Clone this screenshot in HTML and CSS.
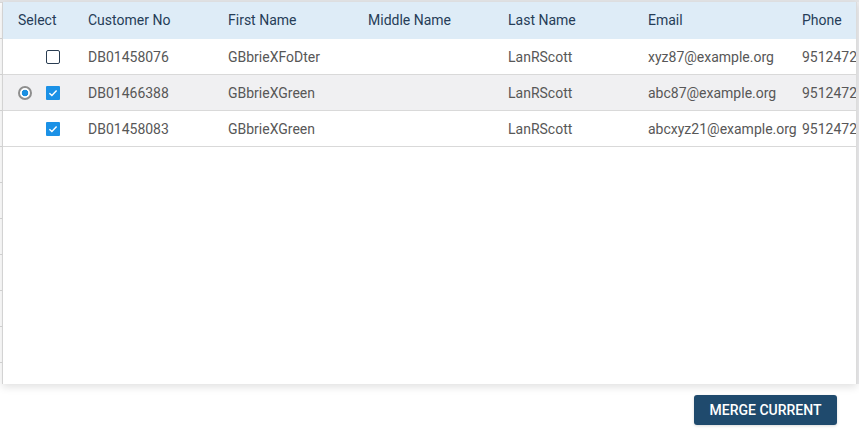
FILE: index.html
```html
<!DOCTYPE html>
<html>
<head>
<meta charset="utf-8">
<link rel="stylesheet" href="styles.css">
</head>
<body>
<div class="page">
  <div class="top-strip"></div>
  <div class="stage">
    <div class="left-edge"></div>
    <div class="panel">
      <div class="row head">
        <div class="cell sel">Select</div>
        <div class="cell">Customer No</div>
        <div class="cell">First Name</div>
        <div class="cell">Middle Name</div>
        <div class="cell">Last Name</div>
        <div class="cell">Email</div>
        <div class="cell">Phone</div>
      </div>
      <div class="row">
        <div class="cell sel"><span class="radio-space"></span><span class="cb"></span></div>
        <div class="cell">DB01458076</div>
        <div class="cell">GBbrieXFoDter</div>
        <div class="cell"></div>
        <div class="cell">LanRScott</div>
        <div class="cell">xyz87@example.org</div>
        <div class="cell">9512472</div>
      </div>
      <div class="row current">
        <div class="cell sel"><span class="radio"></span><span class="cb checked"><svg viewBox="0 0 14 14" width="14" height="14"><path d="M3.4 7.2 L5.9 9.6 L10.6 4.6" fill="none" stroke="#fff" stroke-width="1.4"/></svg></span></div>
        <div class="cell">DB01466388</div>
        <div class="cell">GBbrieXGreen</div>
        <div class="cell"></div>
        <div class="cell">LanRScott</div>
        <div class="cell">abc87@example.org</div>
        <div class="cell">9512472</div>
      </div>
      <div class="row">
        <div class="cell sel"><span class="radio-space"></span><span class="cb checked"><svg viewBox="0 0 14 14" width="14" height="14"><path d="M3.4 7.2 L5.9 9.6 L10.6 4.6" fill="none" stroke="#fff" stroke-width="1.4"/></svg></span></div>
        <div class="cell">DB01458083</div>
        <div class="cell">GBbrieXGreen</div>
        <div class="cell"></div>
        <div class="cell">LanRScott</div>
        <div class="cell">abcxyz21@example.org</div>
        <div class="cell">9512472</div>
      </div>
    </div>
    <div class="right-edge"></div>
  </div>
  <div class="footer">
    <button class="merge">MERGE CURRENT</button>
  </div>
</div>
</body>
</html>
```
FILE: styles.css
```css
* { box-sizing: border-box; }
html, body { margin: 0; padding: 0; background: #fff; }
body { font-family: Roboto, "Noto Sans", sans-serif; font-size: 14px; }
.page { width: 859px; height: 446px; display: flex; flex-direction: column; overflow: hidden; }
.top-strip { height: 2px; background: #e3e4e6; flex: none; }
.stage { display: flex; height: 382px; flex: none; }
.left-edge {
  width: 2px; flex: none;
  background: repeating-linear-gradient(to bottom, #dadada 0, #dadada 1px, #fff 1px, #fff 36px);
}
.panel {
  width: 855px; flex: none;
  border-left: 1px solid #d3d3d3;
  border-right: 1px solid #dcdcdc;
  background: #fff;
  box-shadow: 0 3px 8px rgba(0,0,0,0.12);
  position: relative; z-index: 1;
  overflow: hidden;
}
.right-edge { width: 2px; flex: none; background: #ececee; }
.row {
  display: grid;
  grid-template-columns: 71px 140px 140px 140px 140px 154px 1fr;
  height: 36px;
  border-bottom: 1px solid #d9d9d9;
  color: #575757;
  align-items: center;
  white-space: nowrap;
}
.row.head { height: 37px; padding-bottom: 1px; background: #deecf7; color: #263d57; font-weight: 400; border-bottom: none; }
.row.current { background: #f0f0f2; }
.cell { padding-left: 14px; overflow: visible; }
.cell.sel { padding-left: 15px; display: flex; align-items: center; gap: 14px; }
.radio-space { width: 14px; height: 14px; }
.radio {
  width: 14px; height: 14px; border-radius: 50%;
  border: 2px solid #8e8e8e;
  background: radial-gradient(circle, #1b8fe1 0, #1b8fe1 3px, #fff 3.6px);
}
.cb {
  width: 14px; height: 14px; border-radius: 2px;
  border: 1.5px solid #2a3d52; background: #fff; display: block;
}
.cb.checked { border: none; background: #1b91e6; border-radius: 1px; }
.cb svg { display: block; }
.footer { display: flex; justify-content: flex-end; padding: 11px 22px 0 0; }
.merge {
  width: 143px; height: 30px;
  background: #1f4a6d; color: #fff;
  border: none; border-radius: 3px;
  font-family: Roboto, sans-serif; font-size: 14px; font-weight: 500;
  box-shadow: 0 1px 3px rgba(0,0,0,0.15);
  padding: 0;
}
```
